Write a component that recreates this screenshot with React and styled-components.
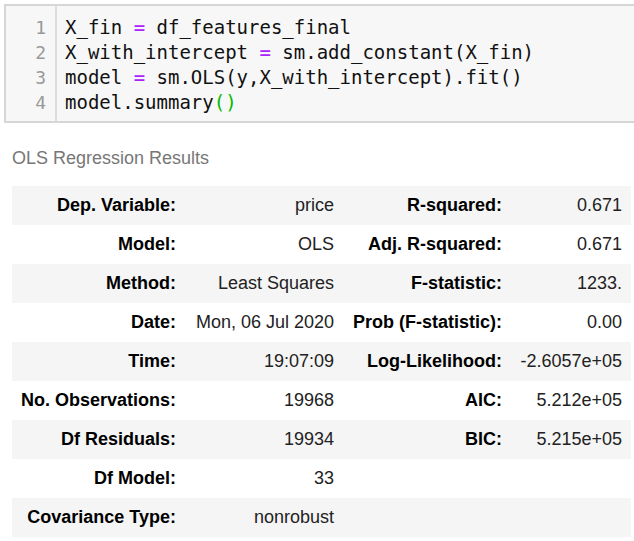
import React from 'react';
import styled, { createGlobalStyle } from 'styled-components';

const GlobalStyle = createGlobalStyle`
  html, body {
    margin: 0;
    padding: 0;
    background: #fff;
    overflow: hidden;
  }
`;

const Page = styled.div`
  width: 634px;
  height: 541px;
  padding-top: 4px;
  box-sizing: border-box;
`;

const CodeCell = styled.div`
  display: flex;
  margin-left: 4px;
  width: 650px;
  border: 2px solid #d6d6d6;
  background: #f7f7f7;
`;

const Gutter = styled.div`
  width: 40px;
  padding: 9px 9px 6px 0;
  border-right: 2px solid #dddddd;
  text-align: right;
  color: #999;
  font-family: "DejaVu Sans Mono", monospace;
  font-size: 18px;
  line-height: 25px;
`;

const Code = styled.pre`
  margin: 0;
  padding: 9px 0 6px 8px;
  color: #111;
  font-family: "DejaVu Sans Mono", monospace;
  font-size: 19px;
  line-height: 25px;
`;

const Op = styled.span`
  color: #aa22ff;
`;

const Bracket = styled.span`
  color: #00bb00;
`;

const Output = styled.div`
  padding: 0 0 0 12px;
  font-family: "Liberation Sans", Arial, sans-serif;
`;

const Caption = styled.div`
  margin-top: 25px;
  color: #777;
  font-size: 18px;
  line-height: 21px;
`;

const Table = styled.div`
  margin-top: 17px;
  width: 619px;
`;

const Row = styled.div`
  display: grid;
  grid-template-columns: 173px 158px 168px 120px;
  background: ${p => (p.$striped ? '#f5f5f5' : '#fff')};
`;

const Cell = styled.div`
  padding: 9px;
  text-align: right;
  font-size: 18px;
  line-height: 21px;
  white-space: nowrap;
  color: ${p => (p.$label ? '#000' : '#222')};
  font-weight: ${p => (p.$label ? 700 : 400)};
`;

const rows = [
  ['Dep. Variable:', 'price', 'R-squared:', '0.671'],
  ['Model:', 'OLS', 'Adj. R-squared:', '0.671'],
  ['Method:', 'Least Squares', 'F-statistic:', '1233.'],
  ['Date:', 'Mon, 06 Jul 2020', 'Prob (F-statistic):', '0.00'],
  ['Time:', '19:07:09', 'Log-Likelihood:', '-2.6057e+05'],
  ['No. Observations:', '19968', 'AIC:', '5.212e+05'],
  ['Df Residuals:', '19934', 'BIC:', '5.215e+05'],
  ['Df Model:', '33', '', ''],
  ['Covariance Type:', 'nonrobust', '', ''],
];

export default function App() {
  return (
    <>
      <GlobalStyle />
      <Page>
        <CodeCell>
          <Gutter>
            1<br />2<br />3<br />4
          </Gutter>
          <Code>
            X_fin <Op>=</Op> df_features_final{'\n'}
            X_with_intercept <Op>=</Op> sm.add_constant(X_fin){'\n'}
            model <Op>=</Op> sm.OLS(y,X_with_intercept).fit(){'\n'}
            model.summary<Bracket>()</Bracket>
          </Code>
        </CodeCell>
        <Output>
          <Caption>OLS Regression Results</Caption>
          <Table>
            {rows.map((r, i) => (
              <Row key={i} $striped={i % 2 === 0}>
                <Cell $label>{r[0]}</Cell>
                <Cell>{r[1]}</Cell>
                <Cell $label>{r[2]}</Cell>
                <Cell>{r[3]}</Cell>
              </Row>
            ))}
          </Table>
        </Output>
      </Page>
    </>
  );
}
